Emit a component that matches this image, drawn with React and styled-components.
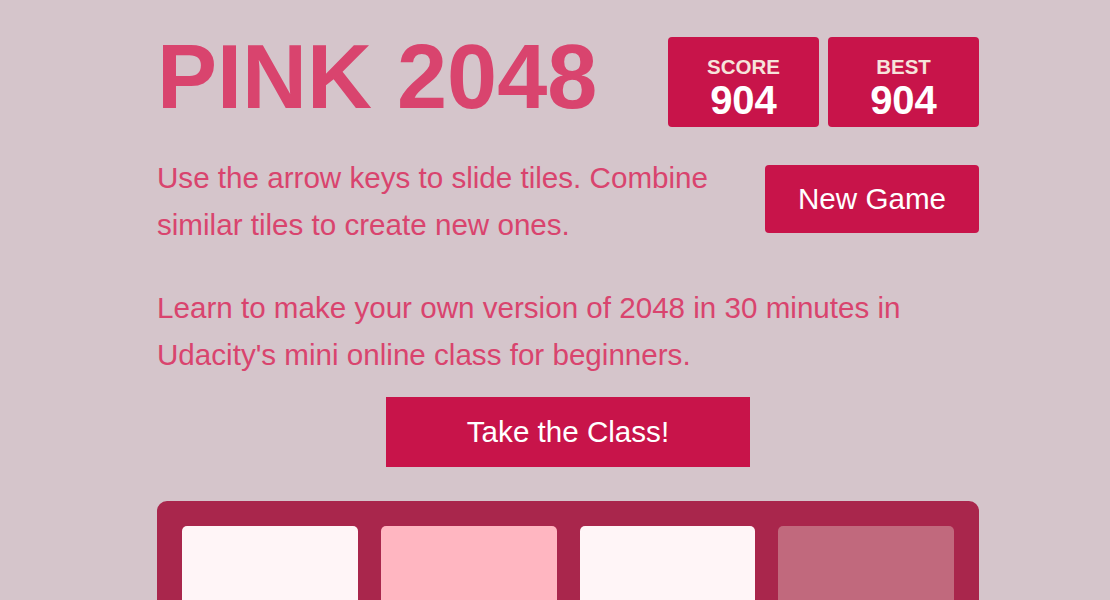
import React from 'react';
import styled, { createGlobalStyle } from 'styled-components';

const tiles = ['#fff5f7', '#ffb6c1', '#fff5f7', '#c1697d', '#fff5f7', '#fff5f7', '#ffb6c1', '#fff5f7', '#fff5f7', '#fff5f7', '#fff5f7', '#fff5f7', '#fff5f7', '#fff5f7', '#fff5f7', '#fff5f7'];

function App() {
  return (
    <>
      <GlobalStyle />
      <Page>
        <Container>
          <Heading>
            <Title>PINK 2048</Title>
            <Scores>
              <ScoreBox>
                <ScoreLabel>SCORE</ScoreLabel>
                <ScoreValue>904</ScoreValue>
              </ScoreBox>
              <ScoreBox>
                <ScoreLabel>BEST</ScoreLabel>
                <ScoreValue>904</ScoreValue>
              </ScoreBox>
            </Scores>
          </Heading>
          <AboveGame>
            <Intro>Use the arrow keys to slide tiles. Combine similar tiles to create new ones.</Intro>
            <NewGameBtn>New Game</NewGameBtn>
          </AboveGame>
          <Promo>
            Learn to make your own version of 2048 in 30 minutes in Udacity's mini online class for beginners.
          </Promo>
          <ClassBtn>Take the Class!</ClassBtn>
          <Board>
            {tiles.map((color, i) => (
              <Tile key={i} $bg={color} />
            ))}
          </Board>
        </Container>
      </Page>
    </>
  );
}
export default App;

const GlobalStyle = createGlobalStyle`
  html, body {
    margin: 0;
    padding: 0;
    background: #d5c5cb;
    font-family: "Liberation Sans", Arial, sans-serif;
    overflow: hidden;
  }
`;

const Page = styled.div`
  padding-left: 26px;
`;

const Container = styled.div`
  width: 822px;
  margin: 0 auto;
`;

const Heading = styled.div`
  display: flex;
  justify-content: space-between;
  align-items: flex-start;
  margin-top: 33px;
`;

const Title = styled.h1`
  margin: 0;
  font-size: 90px;
  line-height: 89px;
  font-weight: 700;
  color: #d9446e;
`;

const Scores = styled.div`
  display: flex;
  gap: 9px;
  margin-top: 4px;
`;

const ScoreBox = styled.div`
  width: 151px;
  height: 90px;
  box-sizing: border-box;
  padding-top: 18px;
  background: #c8144a;
  border-radius: 4px;
  text-align: center;
`;

const ScoreLabel = styled.div`
  font-size: 20.5px;
  line-height: 24px;
  font-weight: 700;
  color: #f6e4dc;
`;

const ScoreValue = styled.div`
  margin-top: 1px;
  font-size: 40px;
  line-height: 40px;
  font-weight: 700;
  color: #ffffff;
`;

const AboveGame = styled.div`
  display: flex;
  justify-content: space-between;
  align-items: flex-start;
  margin-top: 27px;
`;

const Intro = styled.p`
  margin: 0;
  width: 600px;
  font-size: 29.6px;
  line-height: 47px;
  color: #d9446e;
`;

const NewGameBtn = styled.a`
  display: flex;
  align-items: center;
  justify-content: center;
  width: 214px;
  height: 68px;
  margin-top: 11px;
  background: #c8144a;
  border-radius: 4px;
  color: #ffffff;
  font-size: 29.6px;
  cursor: pointer;
`;

const Promo = styled.p`
  margin: 36px 0 0;
  font-size: 29.6px;
  line-height: 47px;
  color: #d9446e;
`;

const ClassBtn = styled.a`
  display: flex;
  align-items: center;
  justify-content: center;
  width: 364px;
  height: 70px;
  margin: 19px auto 0;
  background: #c8144a;
  color: #ffffff;
  font-size: 29.6px;
  cursor: pointer;
`;

const Board = styled.div`
  display: grid;
  grid-template-columns: repeat(4, 1fr);
  gap: 23px;
  padding: 25px;
  margin-top: 34px;
  background: #a9264c;
  border-radius: 10px;
`;

const Tile = styled.div`
  aspect-ratio: 1;
  background: ${(p) => p.$bg};
  border-radius: 5px;
`;
